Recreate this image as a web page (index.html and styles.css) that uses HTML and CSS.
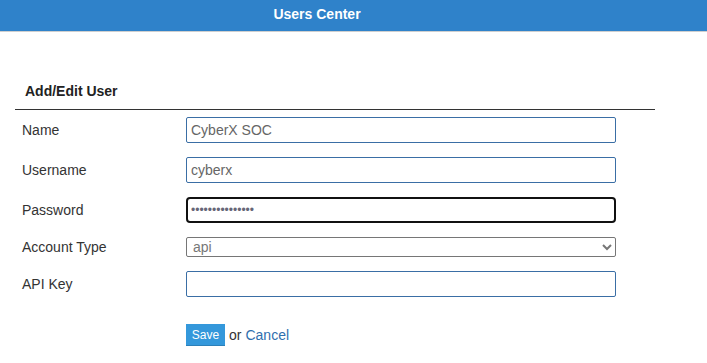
FILE: index.html
```html
<!DOCTYPE html>
<html>
<head>
<meta charset="utf-8">
<link rel="stylesheet" href="styles.css">
</head>
<body>
<header class="topbar"><div class="topbar-title">Users Center</div></header>
<main class="panel">
  <h2 class="panel-title">Add/Edit User</h2>
  <form class="user-form">
    <div class="row row-first">
      <label class="lbl">Name</label>
      <input class="field" type="text" value="CyberX SOC">
    </div>
    <div class="row">
      <label class="lbl">Username</label>
      <input class="field" type="text" value="cyberx">
    </div>
    <div class="row">
      <label class="lbl">Password</label>
      <input class="field field-focus" type="password" value="abcdefghijklmno">
    </div>
    <div class="row">
      <label class="lbl">Account Type</label>
      <select class="select"><option>api</option></select>
    </div>
    <div class="row">
      <label class="lbl">API Key</label>
      <input class="field" type="text" value="">
    </div>
    <div class="actions">
      <button type="button" class="btn-save">Save</button>
      <span class="or">or</span>
      <a class="cancel" href="#">Cancel</a>
    </div>
  </form>
</main>
</body>
</html>
```
FILE: styles.css
```css
html, body {
  margin: 0;
  padding: 0;
  background: #fff;
  font-family: "Liberation Sans", Arial, sans-serif;
  color: #333;
}
.topbar {
  height: 31px;
  background: #2f82ca;
  border-bottom: 1px solid #cfcfcf;
}
.topbar-title {
  width: 634px;
  text-align: center;
  color: #fff;
  font-weight: bold;
  font-size: 14px;
  line-height: 29px;
}
.panel {
  width: 640px;
  margin-left: 15px;
}
.panel-title {
  margin: 49px 0 0 0;
  padding: 0 10px 8px 10px;
  font-size: 14px;
  line-height: 20px;
  font-weight: bold;
  color: #222;
  border-bottom: 1px solid #333;
}
.user-form {
  margin: 0;
}
.row {
  display: flex;
  align-items: center;
  margin-top: 14px;
}
.row-first {
  margin-top: 7px;
}
.lbl {
  width: 171px;
  padding-left: 7px;
  box-sizing: border-box;
  font-size: 14px;
  color: #333;
}
.field {
  width: 430px;
  height: 26px;
  box-sizing: border-box;
  border: 1px solid #3a6ea5;
  border-radius: 2px;
  padding: 0 4px;
  font-family: "Liberation Sans", Arial, sans-serif;
  font-size: 14px;
  color: #666;
  background: #fff;
  outline: none;
}
.field-focus {
  border: 2px solid #111;
  border-radius: 4px;
  padding: 0 3px;
  font-size: 12px;
  color: #667;
}
.select {
  width: 430px;
  height: 20px;
  box-sizing: border-box;
  border: 1px solid #767676;
  border-radius: 2px;
  padding: 0 2px;
  font-family: "Liberation Sans", Arial, sans-serif;
  font-size: 14px;
  color: #777;
  background: #fff;
}
.actions {
  display: flex;
  align-items: center;
  margin-top: 27px;
  padding-left: 171px;
  font-size: 14px;
}
.btn-save {
  height: 22px;
  width: 39px;
  padding: 0;
  border: none;
  background: #3498db;
  color: #fff;
  font-family: "Liberation Sans", Arial, sans-serif;
  font-size: 12px;
  border-bottom: 1px solid #2c80b9;
}
.or {
  margin-left: 4px;
  color: #333;
}
.cancel {
  margin-left: 4px;
  color: #2f6fae;
  text-decoration: none;
}
```
